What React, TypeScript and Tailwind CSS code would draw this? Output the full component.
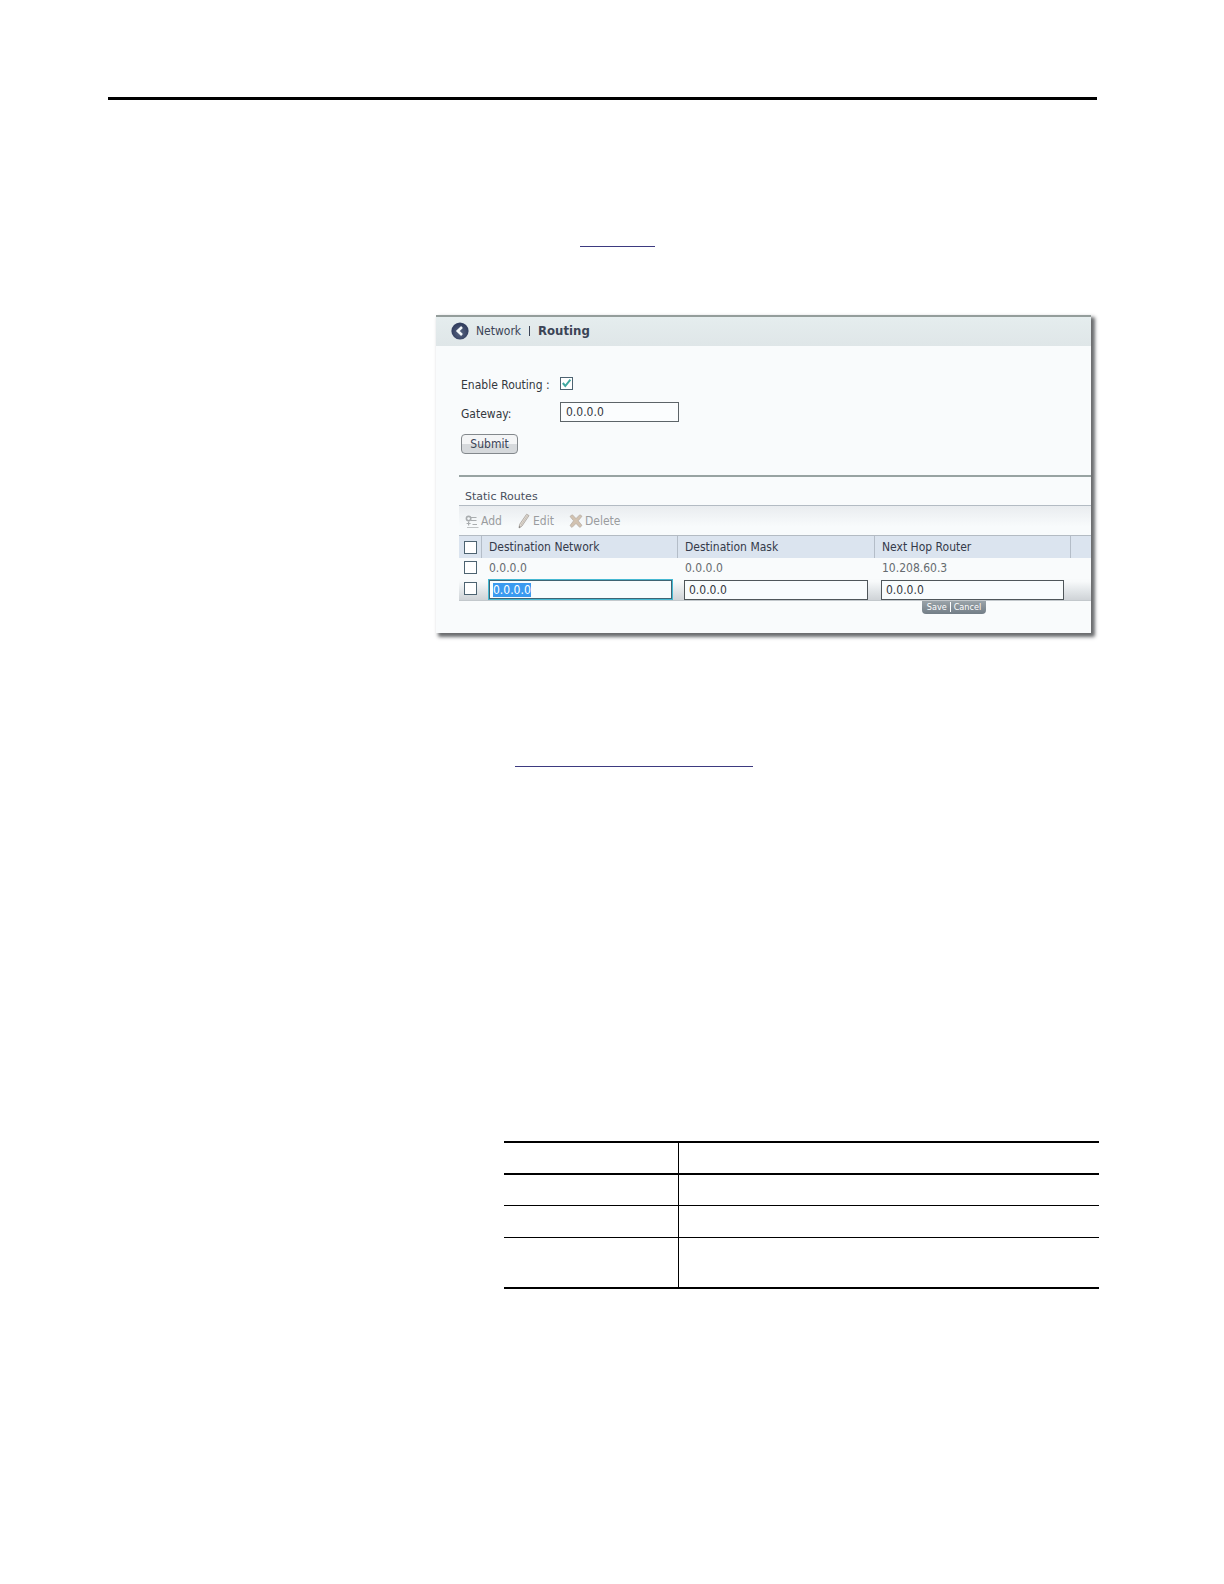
import React from "react";

const box =
  "block size-[13px] appearance-none border border-[#4d6371] bg-white";

function CheckedBox() {
  return (
    <span className="relative block size-[13px]">
      <input
        id="enable-routing"
        type="checkbox"
        defaultChecked
        className="block size-[13px] appearance-none border border-[#4d6371] bg-white"
      />
      <svg
        viewBox="0 0 13 13"
        className="pointer-events-none absolute inset-0 size-[13px]"
        fill="none"
        stroke="#3fa8a0"
        strokeWidth="2"
        aria-hidden="true"
      >
        <path d="M2.8 6 L5.3 9 L10.4 2.6" />
      </svg>
    </span>
  );
}

function BackIcon() {
  return (
    <svg viewBox="0 0 18 18" className="size-[18px]" aria-hidden="true">
      <defs>
        <radialGradient id="ball" cx="0.5" cy="0.6" r="0.5">
          <stop offset="0" stopColor="#5b6884" />
          <stop offset="1" stopColor="#333f60" />
        </radialGradient>
      </defs>
      <circle cx="9" cy="9" r="8.6" fill="url(#ball)" />
      <path d="M11 5 L6.8 9 L11 13" fill="none" stroke="#f4f8fa" strokeWidth="2.6" />
    </svg>
  );
}

function AddIcon() {
  return (
    <svg viewBox="0 0 14 14" className="size-[14px]" fill="none" stroke="#a9adaf" aria-hidden="true">
      <circle cx="3.6" cy="4.6" r="2.2" strokeWidth="1.6" />
      <path d="M6 3.5 H11.5 M6 6.5 H11.5" strokeWidth="1" />
      <path d="M3.6 7.5 V11.5 M1.6 9.5 H5.6" strokeWidth="1.2" />
      <path d="M7.5 10.5 H12" />
      <path d="M2 13.5 H13.5" stroke="#bfc3c5" />
    </svg>
  );
}

function EditIcon() {
  return (
    <svg viewBox="0 0 12 16" className="h-4 w-3" aria-hidden="true">
      <path d="M8.6 1.2 L11 2.6 L4 13 L1 15 L1.6 11.4 Z" fill="#e3dcd3" stroke="#b3aea9" strokeWidth="1" />
      <path d="M1 15 L1.3 13 L2.6 13.9 Z" fill="#777" />
      <path d="M9.6 2.4 L3 12.2" stroke="#c0b9b0" strokeWidth="0.8" />
    </svg>
  );
}

function DeleteIcon() {
  return (
    <svg viewBox="0 0 14 14" className="size-[14px]" aria-hidden="true">
      <path
        d="M1 2.4 L3.4 0.8 L7 4.6 L10.8 0.8 L13 2.2 L9.2 6.8 L13 11.4 L10.8 13.4 L7 9.4 L3 13.4 L1 11.6 L4.6 6.8 Z"
        fill="#d2c2b0"
        stroke="#b9b0a7"
        strokeWidth="0.8"
      />
    </svg>
  );
}

const tools = [
  { label: "Add", icon: <AddIcon />, width: "w-[53px] gap-[2px]" },
  { label: "Edit", icon: <EditIcon />, width: "w-[51px] gap-[3px]" },
  { label: "Delete", icon: <DeleteIcon />, width: "gap-[2px]" },
];

const columns = ["Destination Network", "Destination Mask", "Next Hop Router"];

function RoutingPanel() {
  return (
    <section className="border-t-2 border-[#949d9b] bg-[#f9fbfc] pb-[19px] font-['DejaVu_Sans_Condensed','DejaVu_Sans',sans-serif] text-xs text-[#33383e] shadow-[3px_3px_3px_0px_#6a6c6e,3px_3px_4px_1px_#a0a2a4]">
      <header className="flex h-[29px] items-center bg-linear-to-b from-[#e5edee] to-[#dfe6e8] pb-px pl-[15px] text-[#3b4456]">
        <a href="#network" className="flex items-center gap-[7px]">
          <BackIcon />
          Network
        </a>
        <span className="ml-2 h-[10px] w-px bg-[#3b4456]" />
        <h1 className="ml-2 text-[13px] font-bold">Routing</h1>
      </header>

      <form className="pt-[30px] pl-[25px]" onSubmit={(e) => e.preventDefault()}>
        <div className="flex h-[14px] items-center">
          <label htmlFor="enable-routing" className="w-[99px] pt-1">
            Enable Routing :
          </label>
          <CheckedBox />
        </div>
        <div className="mt-3 flex h-5 items-center">
          <label htmlFor="gateway" className="w-[99px] pt-1">
            Gateway:
          </label>
          <input
            id="gateway"
            defaultValue="0.0.0.0"
            className="h-5 w-[119px] border border-[#5d6468] bg-[#fbfdfe] pl-[5px] text-xs text-[#33383e] outline-none"
          />
        </div>
        <button className="mt-3 block h-5 w-[57px] rounded border border-[#83888c] bg-linear-to-b from-[#f4f5f6] from-50% to-[#d6d9dc] to-50% text-xs leading-[18px] text-[#3b4456]">
          Submit
        </button>
      </form>

      <div className="mt-[21px] ml-[23px] border-t-2 border-[#98a3a2]">
        <h2 className="h-7 pt-3 pl-[6px] font-['DejaVu_Sans',sans-serif] text-[11px] leading-4 text-[#4a505c]">Static Routes</h2>
        <div className="flex h-[31px] items-center border-y border-[#b3bbc3] bg-linear-to-b from-[#e9ecef] to-[#f8fbfc] to-70% pl-[6px] text-[#9a9c9e]">
          {tools.map((t) => (
            <button key={t.label} type="button" className={"flex items-center text-left " + t.width}>
              {t.icon}
              {t.label}
            </button>
          ))}
        </div>
        <table className="w-full table-fixed border-separate border-spacing-0 text-left">
          <colgroup>
            <col className="w-[23px]" />
            <col className="w-[196px]" />
            <col className="w-[197px]" />
            <col className="w-[196px]" />
            <col />
          </colgroup>
          <thead>
            <tr className="h-[22px] bg-[#dbe4ef] text-[#343a4a]">
              <th className="border-r border-[#b4bdc8] p-0 pl-[5px]">
                <input type="checkbox" aria-label="Select all routes" className={box} />
              </th>
              {columns.map((c) => (
                <th key={c} className="border-r border-[#b4bdc8] p-0 pl-[7px] font-normal">
                  {c}
                </th>
              ))}
              <th className="p-0" />
            </tr>
          </thead>
          <tbody>
            <tr className="h-[21px] text-[#666b70]">
              <td className="p-0 pb-[2px] pl-[5px]">
                <input type="checkbox" aria-label="Select route 10.208.60.3" className={box} />
              </td>
              <td className="p-0 pb-px pl-[7px]">0.0.0.0</td>
              <td className="p-0 pb-px pl-[7px]">0.0.0.0</td>
              <td className="p-0 pb-px pl-[7px]">10.208.60.3</td>
              <td className="p-0" />
            </tr>
            <tr className="h-[22px] bg-linear-to-b from-[#f8fafb] from-10% via-[#dfe3e6] via-60% to-[#cdd1d5]">
              <td className="border-b border-[#c3c8cc] p-0 pb-[2px] pl-[5px]">
                <input type="checkbox" aria-label="Select new route" className={box} />
              </td>
              <td className="border-b border-[#c3c8cc] p-0 pr-[5px] pl-[6px]">
                <div className="flex h-[21px] items-center border border-[#45b8d2] bg-[#f9fcfd] outline-1 -outline-offset-2 outline-[#3f6473]">
                  <input
                    aria-label="Destination Network"
                    defaultValue="0.0.0.0"
                    className="ml-1 h-[14px] w-[38px] bg-[#3a9af0] text-xs leading-[14px] text-white outline-none"
                  />
                </div>
              </td>
              <td className="border-b border-[#c3c8cc] p-0 pr-[7px] pl-[6px]">
                <input
                  aria-label="Destination Mask"
                  defaultValue="0.0.0.0"
                  className="block h-5 w-full border border-[#4f565a] bg-[#f9fcfd] pl-1 text-xs outline-none"
                />
              </td>
              <td className="border-b border-[#c3c8cc] p-0 pr-[7px] pl-[6px]">
                <input
                  aria-label="Next Hop Router"
                  defaultValue="0.0.0.0"
                  className="block h-5 w-full border border-[#4f565a] bg-[#f9fcfd] pl-1 text-xs outline-none"
                />
              </td>
              <td className="border-b border-[#c3c8cc] p-0" />
            </tr>
          </tbody>
        </table>
        <div className="ml-[463px] flex h-[13px] w-16 items-center justify-center rounded-b bg-linear-to-b from-[#9aa3a9] to-[#737e87] pb-px text-[9px] leading-3 text-white">
          <button type="button">Save</button>
          <span className="mx-[3px] h-[10px] w-px bg-white" />
          <button type="button">Cancel</button>
        </div>
      </div>
    </section>
  );
}

function ParameterTable() {
  const top = "border-t-2 border-black p-0";
  const thin = "border-t border-black p-0";
  return (
    <table className="mt-[374px] ml-[68px] w-[calc(100%-60px)] table-fixed border-separate border-spacing-0 border-b-2 border-black">
      <colgroup>
        <col className="w-[175px]" />
        <col />
      </colgroup>
      <tbody>
        <tr className="h-8">
          <td className={top + " border-r"} />
          <td className={top} />
        </tr>
        <tr className="h-8">
          <td className={top + " border-r"} />
          <td className={top} />
        </tr>
        <tr className="h-8">
          <td className={thin + " border-r"} />
          <td className={thin} />
        </tr>
        <tr className="h-[50px]">
          <td className={thin + " border-r"} />
          <td className={thin} />
        </tr>
      </tbody>
    </table>
  );
}

export default function App() {
  return (
    <div className="min-h-screen bg-white pt-[97px] pb-[295px] pl-[108px]">
      <div className="mr-[127px] h-[3px] bg-black" />
      <main className="mr-[133px] ml-[328px]">
        <a href="#page" aria-label="See page" className="mt-[127px] ml-36 block h-5 w-[75px] border-b border-[#3d3a80]" />
        <div className="mt-[68px]">
          <RoutingPanel />
        </div>
        <a href="#details" aria-label="See details" className="mt-[114px] ml-[79px] block h-5 w-[238px] border-b border-[#3d3a80]" />
        <ParameterTable />
      </main>
    </div>
  );
}
